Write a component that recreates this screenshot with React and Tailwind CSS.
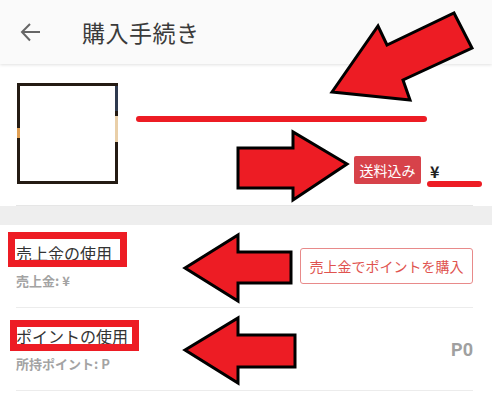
import React from "react";

const FONT = { fontFamily: '"Noto Sans CJK JP", "Noto Sans", Roboto, sans-serif' };

function BackIcon() {
  return (
    <svg width="24" height="24" viewBox="0 0 24 24" className="text-[#666]">
      <path
        d="M3 12h18M11 4l-8 8 8 8.5"
        fill="none"
        stroke="currentColor"
        strokeWidth="2"
        strokeLinecap="butt"
        strokeLinejoin="miter"
      />
    </svg>
  );
}

// red marker arrows drawn on top of the screenshot
function Marks() {
  const arrows = [
    "332,92 378,26 387,45 454,13 472,48 403,80 410,100",
    "347,164 293,132 293,148 238,148 238,188 293,188 293,200",
    "185,268 238,235 238,252 291,252 291,283 238,283 238,301",
    "185,350 238,318 238,335 295,335 295,367 238,367 238,383",
  ];
  return (
    <svg
      className="absolute inset-0 z-20 pointer-events-none"
      width="492"
      height="401"
      viewBox="0 0 492 401"
    >
      {arrows.map((p, i) => (
        <polygon
          key={i}
          points={p}
          fill="#ed1c24"
          stroke="#000"
          strokeWidth="3"
          strokeLinejoin="miter"
        />
      ))}
      <rect x="11.5" y="235.5" width="112" height="28" fill="none" stroke="#ed1c24" strokeWidth="7" />
      <rect x="13.5" y="323.5" width="122" height="24" fill="none" stroke="#ed1c24" strokeWidth="7" />
    </svg>
  );
}

function Row({ title, sub, right }) {
  return (
    <div className="ml-4 mr-[19px] h-[83px] flex items-center justify-between border-b border-[#ececec]">
      <div className="flex flex-col">
        <div className="text-[16px] leading-[24px] text-[#333]">{title}</div>
        <div className="mt-[6px] text-[13px] leading-[20px] font-bold text-[#a3a3a3]">{sub}</div>
      </div>
      {right}
    </div>
  );
}

export default function App() {
  return (
    <div className="relative w-[492px] h-[401px] bg-white overflow-hidden" style={FONT}>
      {/* Header */}
      <header className="relative z-10 h-[64px] bg-[#fafafa] flex items-center shadow-[0_1px_3px_rgba(0,0,0,0.12)]">
        <div className="ml-[19px] flex items-center">
          <BackIcon />
        </div>
        <h1 className="ml-[39px] text-[23px] leading-none text-[#3a3a3a] tracking-[0.5px]">
          購入手続き
        </h1>
      </header>

      {/* Item */}
      <section className="flex pl-[17px] pt-[19px] pb-[18px]">
        <div className="relative w-[101px] h-[101px] border-[3px] border-[#241b13] bg-white">
          <div className="absolute left-[-3px] top-[42px] w-[3px] h-[10px] bg-[#e0a055]" />
          <div className="absolute right-[-3px] top-[30px] w-[3px] h-[26px] bg-[#e9cfa8]" />
          <div className="absolute right-[-3px] top-0 w-[3px] h-[25px] bg-[#2f3a4f]" />
        </div>
        <div className="ml-[18px] flex-1 pr-[10px] flex flex-col">
          <div className="mt-[33px] w-[291px] h-[6px] rounded-full bg-[#ed1c24]" />
          <div className="mt-[34px] flex justify-end items-start">
            <span className="w-[67px] h-[28px] rounded-[2px] bg-[#d7424a] text-white text-[14px] flex items-center justify-center">
              送料込み
            </span>
            <div className="ml-[6px] w-[55px] flex flex-col">
              <span className="ml-[3px] mt-[5px] text-[16px] leading-[20px] font-bold text-[#222]">¥</span>
              <div className="h-[6px] rounded-full bg-[#ed1c24]" />
            </div>
          </div>
        </div>
      </section>
      <div className="ml-4 mr-[19px] h-px bg-[#e6e6e6]" />
      <div className="h-[19px] bg-[#eeeeee]" />

      {/* Usage rows */}
      <Row
        title="売上金の使用"
        sub="売上金: ¥"
        right={
          <button
            type="button"
            className="h-[36px] w-[173px] rounded-[3px] border border-[#e88a8a] text-[14px] text-[#e0534f] flex items-center justify-center"
          >
            売上金でポイントを購入
          </button>
        }
      />
      <Row
        title="ポイントの使用"
        sub="所持ポイント: P"
        right={<span className="text-[18px] font-bold text-[#a0a0a0]" style={{ fontFamily: "Roboto, sans-serif" }}>P0</span>}
      />

      <Marks />
    </div>
  );
}
